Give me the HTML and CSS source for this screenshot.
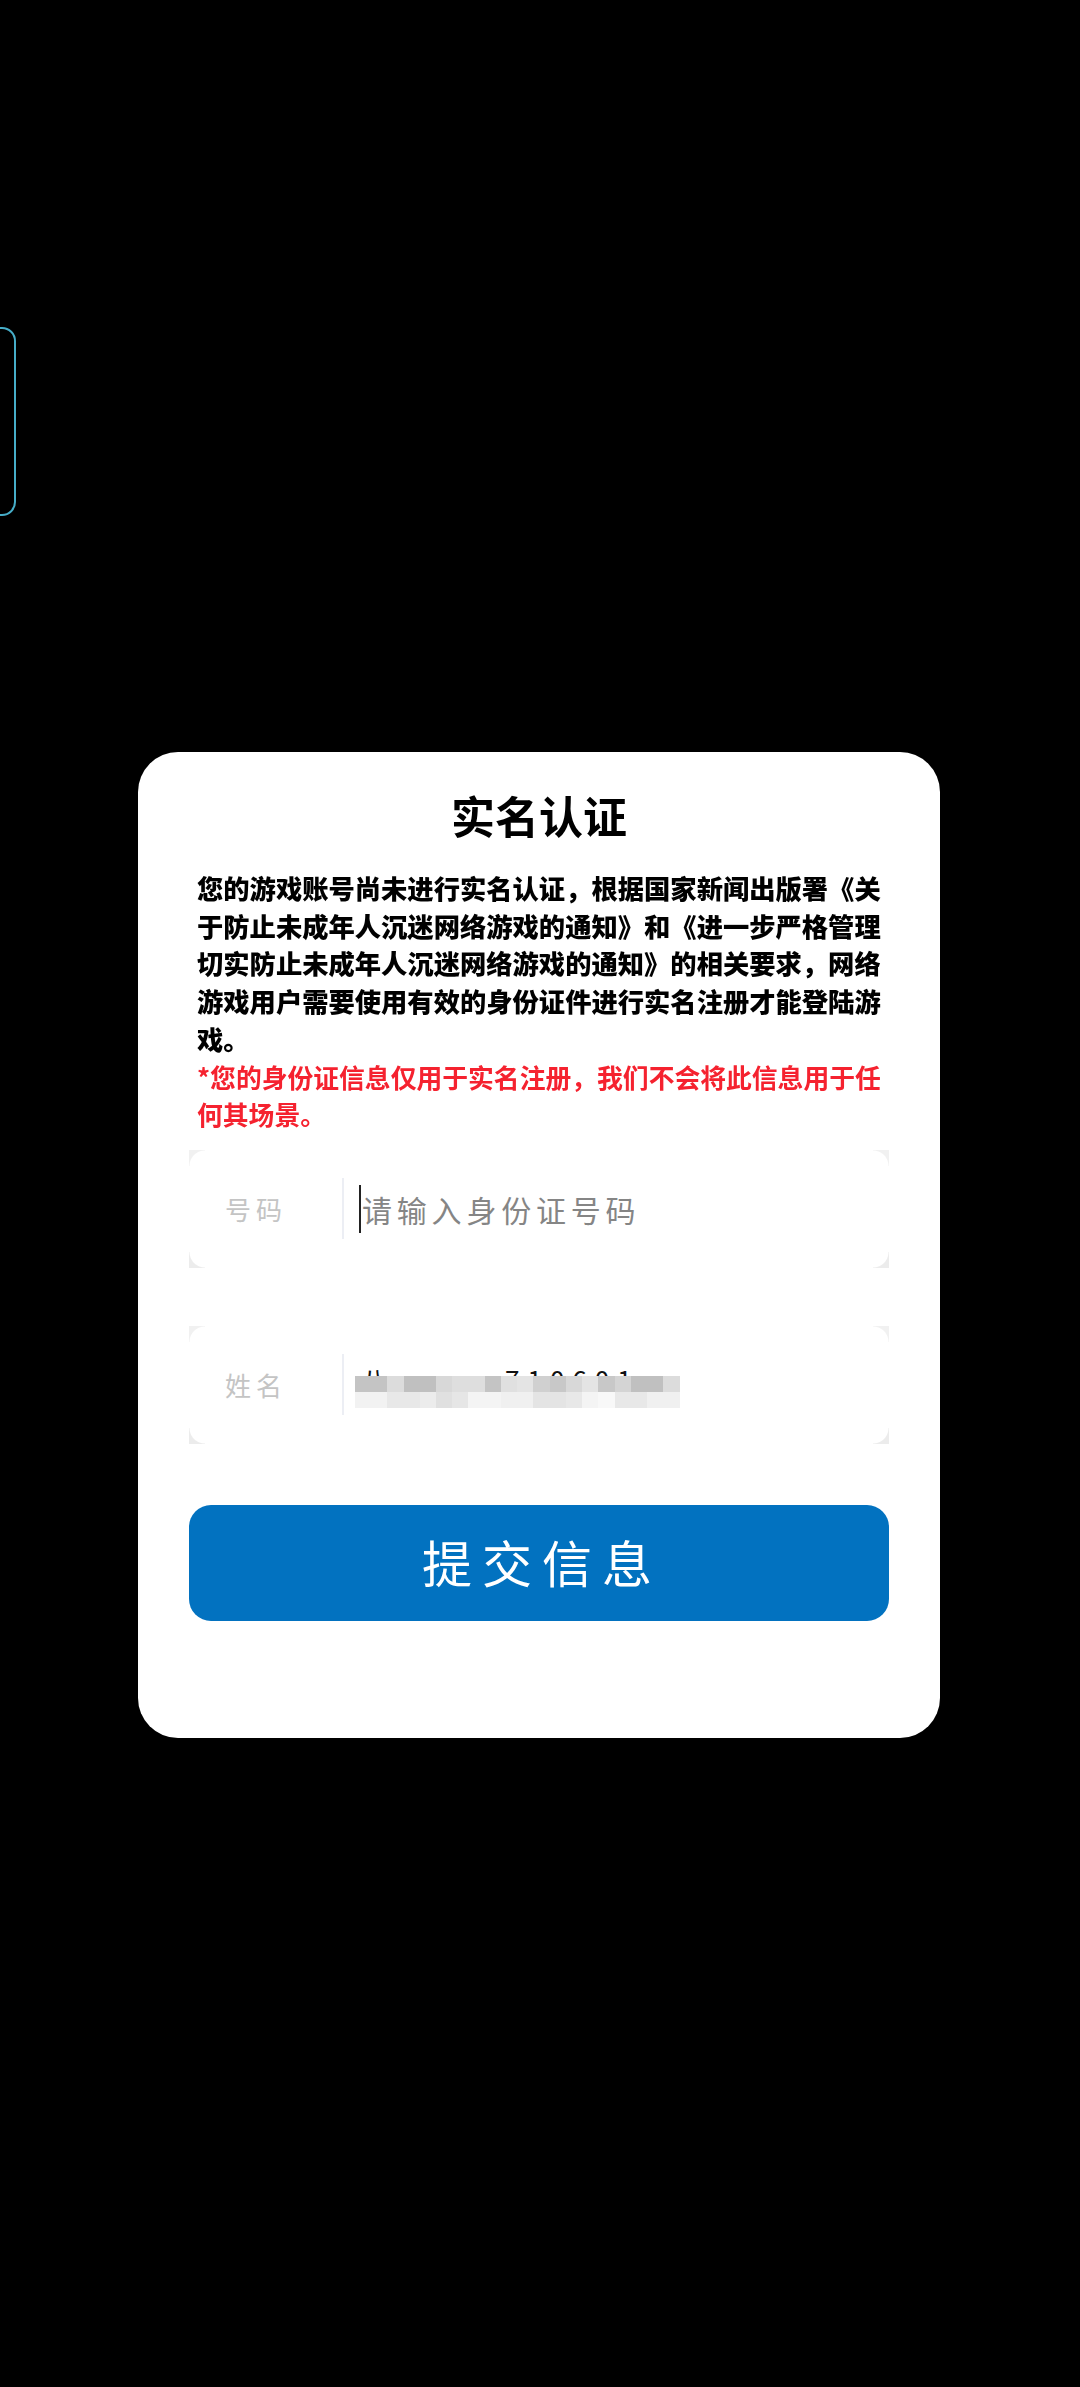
FILE: index.html
```html
<!DOCTYPE html>
<html lang="zh">

<head>
    <meta charset="UTF-8">
    <meta name="viewport" content="width=device-width, initial-scale=1.0">
    <title>实名认证</title>
    <link rel="stylesheet" href="styles.css">
</head>

<body>
    <div class="side-tab"></div>

    <div class="card">
        <h1>实名认证</h1>
        <p class="notice">您的游戏账号尚未进行实名认证，根据国家新闻出版署《关于防止未成年人沉迷网络游戏的通知》和《进一步严格管理切实防止未成年人沉迷网络游戏的通知》的相关要求，网络游戏用户需要使用有效的身份证件进行实名注册才能登陆游戏。</p>
        <p class="notice warn">*您的身份证信息仅用于实名注册，我们不会将此信息用于任何其场景。</p>

        <div class="field">
            <span class="corner tl"></span><span class="corner tr"></span>
            <span class="corner bl"></span><span class="corner br"></span>
            <label>号码</label>
            <div class="value">
                <span class="caret"></span>
                <span class="placeholder">请输入身份证号码</span>
            </div>
        </div>

        <div class="field second">
            <span class="corner tl"></span><span class="corner tr"></span>
            <span class="corner bl"></span><span class="corner br"></span>
            <label>姓名</label>
            <div class="value">
                <div class="hidden-text"><span class="hidden-a">八</span><span class="hidden-b">710601</span></div>
                <div class="mosaic">
                    <div class="mosaic-top"></div>
                    <div class="mosaic-bottom"></div>
                </div>
            </div>
        </div>

        <button class="submit">提交信息</button>
    </div>
</body>

</html>
```

FILE: styles.css
```css
body {
    margin: 0;
    height: 2387px;
    overflow: hidden;
    background-color: #000;
    font-family: "Noto Sans CJK SC", "Liberation Sans", sans-serif;
    position: relative;
}

.side-tab {
    position: absolute;
    left: -20px;
    top: 327px;
    width: 32px;
    height: 185px;
    border: 2px solid #46adc8;
    border-radius: 14px;
}

.card {
    box-sizing: border-box;
    width: 802px;
    height: 986px;
    margin: 752px 0 0 138px;
    padding: 33px 51px 0;
    background-color: #fff;
    border-radius: 40px;
}

h1 {
    margin: 0 0 24px;
    font-size: 44px;
    line-height: 60px;
    font-weight: 700;
    text-align: center;
    color: #000;
    filter: blur(0.6px);
}

.notice {
    margin: 0;
    padding-left: 8px;
    font-size: 26.3px;
    line-height: 37.7px;
    font-weight: 900;
    color: #000;
    filter: blur(0.7px);
}

.warn {
    font-size: 25.8px;
    font-weight: 700;
    color: #f5222f;
}

.field {
    position: relative;
    display: flex;
    align-items: center;
    height: 118px;
    margin-top: 17px;
}

.second {
    margin-top: 58px;
}

.corner {
    position: absolute;
    width: 16px;
    height: 16px;
}

.tl {
    left: 0;
    top: 0;
    background: radial-gradient(circle at 100% 100%, transparent 15px, #f1f1f1 16px);
}

.tr {
    right: 0;
    top: 0;
    background: radial-gradient(circle at 0 100%, transparent 15px, #f1f1f1 16px);
}

.bl {
    left: 0;
    bottom: 0;
    background: radial-gradient(circle at 100% 0, transparent 15px, #ececec 16px);
}

.br {
    right: 0;
    bottom: 0;
    background: radial-gradient(circle at 0 0, transparent 15px, #ececec 16px);
}

label {
    box-sizing: border-box;
    width: 153px;
    padding-left: 36px;
    font-size: 26px;
    letter-spacing: 5px;
    color: #c4c4c4;
}

.value {
    position: relative;
    display: flex;
    align-items: center;
    gap: 1px;
    height: 61px;
    padding-left: 15px;
    border-left: 2px solid #eceef4;
}

.caret {
    width: 2px;
    height: 48px;
    background-color: #222;
}

.placeholder {
    font-size: 30px;
    letter-spacing: 4.8px;
    color: #858585;
}

/* sits behind the mosaic, only the tops of the characters show */
.hidden-text {
    position: absolute;
    left: 11px;
    top: 12px;
    width: 325px;
    font-size: 26px;
    line-height: 26px;
    color: #111;
    white-space: nowrap;
}

.hidden-a {
    margin-left: 6px;
}

.hidden-b {
    margin-left: 118px;
    letter-spacing: 8px;
}

.mosaic {
    position: absolute;
    left: 11px;
    top: 22px;
    width: 325px;
}

.mosaic-top,
.mosaic-bottom {
    height: 16px;
}

.mosaic-top {
    background: linear-gradient(90deg,
        #c4c4c4 0 32px, #dcdcdc 32px 49px, #c0c0c0 49px 81px, #d8d8d8 81px 97px,
        #dedede 97px 130px, #c4c4c4 130px 146px, #e0e0e0 146px 162px, #e4e4e4 162px 178px,
        #d0d0d0 178px 195px, #c8c8c8 195px 211px, #d8d8d8 211px 227px, #e4e4e4 227px 243px,
        #c8c8c8 243px 260px, #d4d4d4 260px 276px, #c0c0c0 276px 308px, #dcdcdc 308px 325px);
}

.mosaic-bottom {
    background: linear-gradient(90deg,
        #f2f2f2 0 32px, #e8e8e8 32px 65px, #ececec 65px 81px, #e0e0e0 81px 97px,
        #e6e6e6 97px 113px, #f4f4f4 113px 146px, #f0f0f0 146px 178px, #e4e4e4 178px 211px,
        #e8e8e8 211px 227px, #f4f4f4 227px 243px, #f8f8f8 243px 260px, #e8e8e8 260px 292px,
        #f0f0f0 292px 325px);
}

.submit {
    display: block;
    width: 100%;
    height: 116px;
    margin-top: 61px;
    padding: 0 0 4px 6px;
    border: none;
    border-radius: 22px;
    background-color: #0272c0;
    color: #fff;
    font-family: inherit;
    font-size: 50px;
    letter-spacing: 10px;
    cursor: pointer;
}
```
